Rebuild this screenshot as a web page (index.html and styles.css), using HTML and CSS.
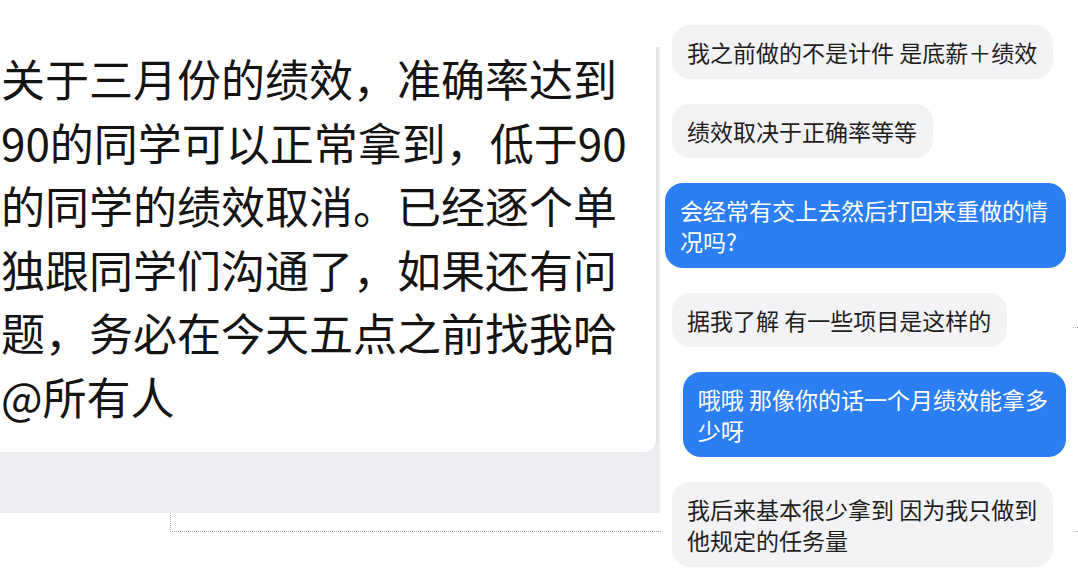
FILE: index.html
```html
<!DOCTYPE html>
<html lang="zh-CN">
<head>
<meta charset="utf-8">
<title>绩效</title>
<link rel="stylesheet" href="styles.css">
</head>
<body>
<div class="page">
  <section class="left">
    <div class="sheet">
      <div class="card">
        <p class="notice">关于三月份的绩效，准确率达到<br>90的同学可以正常拿到，低于90<br>的同学的绩效取消。已经逐个单<br>独跟同学们沟通了，如果还有问<br>题，务必在今天五点之前找我哈<br>@所有人</p>
      </div>
    </div>
    <div class="dotted"></div>
  </section>
  <section class="chat">
    <div class="msg in">我之前做的不是计件 是底薪＋绩效</div>
    <div class="msg in">绩效取决于正确率等等</div>
    <div class="msg out">会经常有交上去然后打回来重做的情<br>况吗?</div>
    <div class="msg in">据我了解 有一些项目是这样的</div>
    <div class="msg out">哦哦 那像你的话一个月绩效能拿多<br>少呀</div>
    <div class="msg in">我后来基本很少拿到 因为我只做到<br>他规定的任务量</div>
    <span class="tick t1"></span>
    <span class="tick t2"></span>
  </section>
</div>
</body>
</html>
```

FILE: styles.css
```css
html, body {
  margin: 0;
  padding: 0;
  background: #ffffff;
  overflow: hidden;
}

body {
  font-family: "Noto Sans CJK SC", "Noto Sans", sans-serif;
}

.page {
  display: flex;
  width: 1078px;
  height: 572px;
}

.left {
  width: 660px;
  flex: none;
}

.sheet {
  margin-top: 47px;
  background: #eceef1;
  padding-bottom: 61px;
}

.card {
  height: 405px;
  background: #ffffff;
  border-right: 2px solid #e3e4e7;
  border-bottom-right-radius: 12px;
  margin-right: 2px;
}

.notice {
  margin: 0;
  padding-left: 1px;
  font-size: 44px;
  line-height: 63.5px;
  color: #141414;
  white-space: nowrap;
}

.dotted {
  margin-left: 170px;
  width: 490px;
  height: 18px;
  border-left: 1px dotted #a9a9a9;
  border-bottom: 1px dotted #a9a9a9;
}

.chat {
  position: relative;
  flex: 1;
  display: flex;
  flex-direction: column;
  gap: 25px;
  padding-top: 25px;
}

.msg {
  font-size: 23px;
  line-height: 31px;
  padding: 11.5px 16px 11.5px 15px;
  border-radius: 18px;
  white-space: nowrap;
}

.msg.in {
  align-self: flex-start;
  margin-left: 12px;
  background: #f3f3f5;
  color: #1e1e1e;
}

.msg.out {
  align-self: flex-end;
  margin-right: 12px;
  background: #2c7ef4;
  color: #ffffff;
  padding-right: 18px;
}

.tick {
  position: absolute;
  right: 0;
  width: 5px;
  height: 0;
  border-top: 1px dotted #b5b5b5;
}

.t1 { top: 327px; }
.t2 { top: 531px; }
```
